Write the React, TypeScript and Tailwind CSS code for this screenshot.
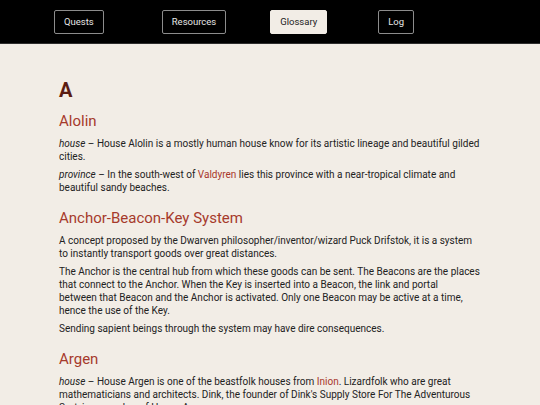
import React from "react";

const font = { fontFamily: "Roboto, 'Noto Sans', sans-serif" };

function NavButton({ label, active, className }: { label: string; active?: boolean; className?: string }) {
  return (
    <button
      className={
        (active
          ? "bg-[#f2ede6] text-[#222] border-[#f2ede6] "
          : "bg-transparent text-[#e6e6e6] border-[#8c8c8c] ") +
        "h-[24px] px-[9px] border rounded-[2px] text-[9.5px] leading-none " +
        (className ?? "")
      }
    >
      {label}
    </button>
  );
}

function Link({ children }: { children: React.ReactNode }) {
  return <span className="text-[#a8372b]">{children}</span>;
}

function Term({ children }: { children: React.ReactNode }) {
  return <h3 className="text-[15px] leading-[20px] text-[#a63a2c] mt-[14px] mb-[6px]">{children}</h3>;
}

function P({ children }: { children: React.ReactNode }) {
  return <p className="text-[10px] leading-[13px] text-[#222] mt-[5px]">{children}</p>;
}

export default function App() {
  return (
    <div style={font} className="w-[540px] h-[405px] overflow-hidden bg-[#f2ede6]">
      <nav className="h-[44px] bg-black border-b border-[#2e2e2e] flex items-center pl-[54px]">
        <NavButton label="Quests" />
        <NavButton label="Resources" className="ml-[58px]" />
        <NavButton label="Glossary" active className="ml-[44px]" />
        <NavButton label="Log" className="ml-[51px]" />
      </nav>
      <main className="w-[422px] mx-auto pt-[33px]">
        <h2 className="text-[20px] leading-[26px] font-bold text-[#5a1c12]">A</h2>
        <h3 className="text-[15px] leading-[20px] text-[#a63a2c] mt-[8px] mb-[6px]">Alolin</h3>
        <P>
          <i>house</i> – House Alolin is a mostly human house know for its artistic lineage and beautiful gilded cities.
        </P>
        <P>
          <i>province</i> – In the south-west of <Link>Valdyren</Link> lies this province with a near-tropical climate and
          beautiful sandy beaches.
        </P>
        <Term>Anchor-Beacon-Key System</Term>
        <P>
          A concept proposed by the Dwarven philosopher/inventor/wizard Puck Drifstok, it is a system to instantly
          transport goods over great distances.
        </P>
        <P>
          The Anchor is the central hub from which these goods can be sent. The Beacons are the places that connect to
          the Anchor. When the Key is inserted into a Beacon, the link and portal
          <br />
          between that Beacon and the Anchor is activated. Only one Beacon may be active at a time, hence the use of the
          Key.
        </P>
        <P>Sending sapient beings through the system may have dire consequences.</P>
        <Term>Argen</Term>
        <P>
          <i>house</i> – House Argen is one of the beastfolk houses from <Link>Inion</Link>. Lizardfolk who are great
          mathematicians and architects. Dink, the founder of Dink's Supply Store For The Adventurous Sort, is a member
          of House Argen.
        </P>
      </main>
    </div>
  );
}
